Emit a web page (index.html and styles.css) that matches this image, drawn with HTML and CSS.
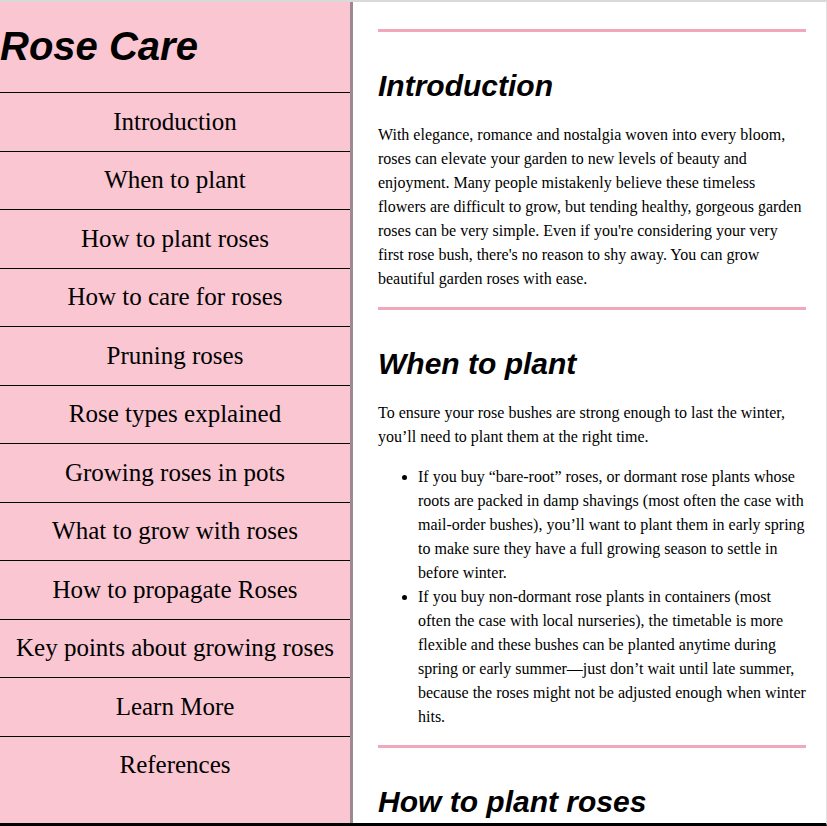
FILE: index.html
```html
<!DOCTYPE html>
<html lang="en">
<head>
<meta charset="utf-8">
<title>Rose Care</title>
<link rel="stylesheet" href="styles.css">
</head>
<body>
<div class="page">
  <nav class="sidebar">
    <header class="brand"><h1>Rose Care</h1></header>
    <a class="nav-link" href="#introduction">Introduction</a>
    <a class="nav-link" href="#when">When to plant</a>
    <a class="nav-link" href="#how">How to plant roses</a>
    <a class="nav-link" href="#care">How to care for roses</a>
    <a class="nav-link" href="#pruning">Pruning roses</a>
    <a class="nav-link" href="#types">Rose types explained</a>
    <a class="nav-link" href="#pots">Growing roses in pots</a>
    <a class="nav-link" href="#companions">What to grow with roses</a>
    <a class="nav-link" href="#propagate">How to propagate Roses</a>
    <a class="nav-link" href="#key">Key points about growing roses</a>
    <a class="nav-link" href="#learn">Learn More</a>
    <a class="nav-link" href="#refs">References</a>
  </nav>
  <main class="content">
    <section class="section" id="introduction">
      <hr class="rule">
      <h2 class="section-title">Introduction</h2>
      <p class="text">With elegance, romance and nostalgia woven into every bloom, roses can elevate your garden to new levels of beauty and enjoyment. Many people mistakenly believe these timeless flowers are difficult to grow, but tending healthy, gorgeous garden roses can be very simple. Even if you're considering your very first rose bush, there's no reason to shy away. You can grow beautiful garden roses with ease.</p>
    </section>
    <section class="section" id="when">
      <hr class="rule">
      <h2 class="section-title">When to plant</h2>
      <p class="text">To ensure your rose bushes are strong enough to last the winter, you’ll need to plant them at the right time.</p>
      <ul class="list">
        <li>If you buy “bare-root” roses, or dormant rose plants whose roots are packed in damp shavings (most often the case with mail-order bushes), you’ll want to plant them in early spring to make sure they have a full growing season to settle in before winter.</li>
        <li>If you buy non-dormant rose plants in containers (most often the case with local nurseries), the timetable is more flexible and these bushes can be planted anytime during spring or early summer—just don’t wait until late summer, because the roses might not be adjusted enough when winter hits.</li>
      </ul>
    </section>
    <section class="section" id="how">
      <hr class="rule">
      <h2 class="section-title">How to plant roses</h2>
    </section>
  </main>
</div>
</body>
</html>
```
FILE: styles.css
```css
html, body {
  margin: 0;
  padding: 0;
  background: #ffffff;
}

.page {
  box-sizing: border-box;
  height: 100vh;
  display: flex;
  overflow: hidden;
  border-top: 2px solid #d9d9d9;
  border-right: 1px solid #e2e2e2;
  border-bottom: 3px solid #000000;
}

.sidebar {
  flex: 0 0 350px;
  display: flex;
  flex-direction: column;
  background: #f9c6d2;
  border-right: 3px solid #9d8991;
}

.brand h1 {
  margin: 0;
  padding: 21px 0 23px 0;
  font-family: "Liberation Sans", Arial, sans-serif;
  font-style: italic;
  font-weight: bold;
  font-size: 40px;
  line-height: 46px;
  color: #000;
}

.nav-link {
  display: block;
  border-top: 1px solid #000;
  padding: 14.5px 0;
  text-align: center;
  font-family: "Liberation Serif", "Times New Roman", serif;
  font-size: 25px;
  line-height: 28.5px;
  color: #000;
  text-decoration: none;
}

.content {
  flex: 1;
  min-width: 0;
  padding: 27px 20px 0 25px;
  overflow: hidden;
  font-family: "Liberation Serif", "Times New Roman", serif;
  color: #000;
}

.rule {
  display: block;
  height: 3px;
  margin: 0;
  border: none;
  background: #f2a8bb;
}

.section-title {
  margin: 36px 0 20px;
  font-family: "Liberation Sans", Arial, sans-serif;
  font-style: italic;
  font-weight: bold;
  font-size: 30px;
  line-height: 35px;
}

.text {
  margin: 0 0 16px;
  font-size: 16px;
  line-height: 24px;
}

.list {
  margin: 0 0 16px;
  padding-left: 40px;
  font-size: 16px;
  line-height: 24px;
}
```
